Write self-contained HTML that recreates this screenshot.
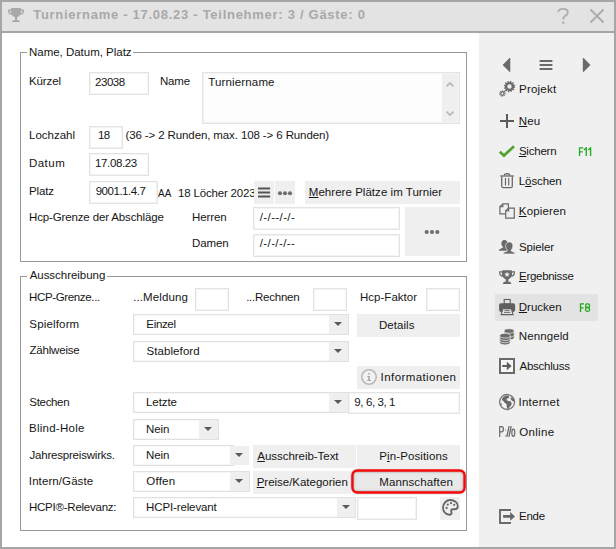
<!DOCTYPE html>
<html><head><meta charset="utf-8"><title>Turnier</title>
<style>
*{box-sizing:border-box;margin:0;padding:0}
html,body{width:616px;height:549px;overflow:hidden;background:#fff}
body{font-family:"Liberation Sans",sans-serif;font-size:11.5px;color:#161616;position:relative}
.a{position:absolute}
.t{position:absolute;white-space:nowrap;line-height:14px}
.grp{position:absolute;border:1px solid #989898}
.inp{position:absolute;border:1px solid #e3e3e3;background:#fff;box-shadow:inset 0 0 0 1px #f4f4f4}
.sel{position:absolute;border:1px solid #e1e1e1;background:#fff;box-shadow:inset 0 0 0 1px #f6f6f6}
.dd{position:absolute;background:#efefef}
.dd:after{content:"";position:absolute;left:50%;top:50%;margin-left:-4.5px;margin-top:-2.5px;border-left:4.5px solid transparent;border-right:4.5px solid transparent;border-top:4.5px solid #5a5a5a}
.btn{position:absolute;background:#efefef}
u{text-decoration:underline;text-underline-offset:0.5px;text-decoration-thickness:1px}
svg{position:absolute;overflow:visible}
</style></head>
<body>
<div class="a" style="left:0px;top:0px;width:616px;height:549px;background:#a6a6a6"></div>
<div class="a" style="left:2px;top:2px;width:612px;height:29px;background:#e3e3e3"></div>
<div class="a" style="left:2px;top:33px;width:477px;height:514px;background:#fff"></div>
<div class="a" style="left:479px;top:33px;width:135px;height:514px;background:#f0f0f0"></div>
<div class="t" style="left:33.20px;top:7px;font-size:13px;font-weight:bold;color:#a9a9a9;letter-spacing:0.720px;line-height:16px">Turniername - 17.08.23 - Teilnehmer: 3 / Gäste: 0</div>
<svg style="left:0;top:0" width="40" height="30" viewBox="0 0 40 30"><path d="M11.100 8H21V12C21 15 18.800 16.600 17.100 17.300V19.800L19.900 21V22H11.900V21L15 19.800V17.300C13.300 16.600 11.100 15 11.100 12Z" fill="#a9a9a9"/><path d="M11.300 10.300H8.600C8.600 13 9.800 14.200 12.300 14.400M20.800 10.300H23.500C23.500 13 22.300 14.200 19.800 14.400" fill="none" stroke="#a9a9a9" stroke-width="1.400"/></svg>
<svg style="left:556.700px;top:8px" width="13" height="16" viewBox="0 0 13 16"><path d="M1.200 4.200C1.500 2 3.300 0.900 6 0.900c2.800 0 4.800 1.300 4.800 3.500 0 1.700-1.100 2.600-2.500 3.500C7 8.700 6.300 9.400 6.300 11v.5" fill="none" stroke="#b0b0b0" stroke-width="1.900"/><rect x="5.300" y="13.500" width="2" height="2.400" fill="#b0b0b0"/></svg>
<svg style="left:590px;top:9px" width="14" height="14" viewBox="0 0 14 14"><path d="M0.500 0.500L13.500 13.500M13.500 0.500L0.500 13.500" stroke="#adadad" stroke-width="2" fill="none"/></svg>
<div class="grp" style="left:20px;top:52px;width:447px;height:210px;"></div>
<div class="grp" style="left:20px;top:276px;width:447px;height:255px;"></div>
<div class="inp" style="left:89px;top:72px;width:60px;height:23px;"></div>
<div class="inp" style="left:202px;top:72px;width:258px;height:52px;background:#fdfdfd"></div>
<div class="a" style="left:442px;top:74px;width:16px;height:48px;background:#efefef"></div>
<svg style="left:446px;top:82px" width="8" height="5" viewBox="0 0 8 5"><path d="M0.600 4.400L4 1l3.400 3.400" fill="none" stroke="#b8b8b8" stroke-width="1.700"/></svg>
<svg style="left:446px;top:111px" width="8" height="5" viewBox="0 0 8 5"><path d="M0.600 0.600L4 4l3.400-3.400" fill="none" stroke="#b8b8b8" stroke-width="1.700"/></svg>
<div class="inp" style="left:89px;top:126px;width:34px;height:23px;"></div>
<div class="inp" style="left:89px;top:153px;width:60px;height:23px;"></div>
<div class="inp" style="left:89px;top:181px;width:69px;height:23px;"></div>
<div class="btn" style="left:254px;top:181px;width:20px;height:23px;"></div>
<svg style="left:258px;top:186.500px" width="13" height="11" viewBox="0 0 13 11"><path d="M0 1.500h12.100M0 5.500h12.100M0 9.500h12.100" stroke="#555" stroke-width="2" fill="none"/></svg>
<div class="btn" style="left:275px;top:181px;width:20px;height:23px;"></div>
<svg style="left:0;top:0" width="1" height="1"><g fill="#6d6d6d"><circle cx="280" cy="193.3" r="2.05"/><circle cx="285" cy="193.3" r="2.05"/><circle cx="290" cy="193.3" r="2.05"/></g></svg>
<div class="btn" style="left:305px;top:181px;width:155px;height:23px;"></div>
<div class="inp" style="left:253px;top:207px;width:147px;height:23px;"></div>
<div class="inp" style="left:253px;top:234px;width:147px;height:23px;"></div>
<div class="btn" style="left:405px;top:207px;width:55px;height:49px;"></div>
<svg style="left:0;top:0" width="1" height="1"><g fill="#6d6d6d"><circle cx="426.7" cy="232" r="2.05"/><circle cx="432" cy="232" r="2.05"/><circle cx="437.3" cy="232" r="2.05"/></g></svg>
<div class="inp" style="left:195px;top:288px;width:34px;height:23px;"></div>
<div class="inp" style="left:313px;top:288px;width:34px;height:23px;"></div>
<div class="inp" style="left:426px;top:288px;width:34px;height:23px;"></div>
<div class="sel" style="left:133px;top:314px;width:216px;height:21px;"></div>
<div class="dd" style="left:329px;top:315px;width:19px;height:19px;"></div>
<div class="btn" style="left:357px;top:314px;width:103px;height:23px;"></div>
<div class="sel" style="left:133px;top:341px;width:216px;height:21px;"></div>
<div class="dd" style="left:329px;top:342px;width:19px;height:19px;"></div>
<div class="btn" style="left:357px;top:366px;width:103px;height:23px;"></div>
<svg style="left:360.500px;top:369px" width="16" height="16" viewBox="0 0 16 16"><circle cx="8" cy="8" r="7.200" fill="#f1f1f1" stroke="#b9b9b9" stroke-width="1.600"/><path d="M7.300 4h1.600v1.600H7.300zM6.300 7h2.600v4h1v1H6.200v-1h1.100V8H6.300z" fill="#a8a8a8"/></svg>
<div class="sel" style="left:133px;top:392px;width:216px;height:21px;"></div>
<div class="dd" style="left:329px;top:393px;width:19px;height:19px;"></div>
<div class="inp" style="left:348px;top:392px;width:112px;height:22px;"></div>
<div class="sel" style="left:133px;top:419px;width:86px;height:21px;"></div>
<div class="dd" style="left:199px;top:420px;width:19px;height:19px;"></div>
<div class="sel" style="left:133px;top:445px;width:101px;height:21px;"></div>
<div class="dd" style="left:230px;top:446px;width:19px;height:19px;"></div>
<div class="btn" style="left:253px;top:445px;width:103px;height:23px;"></div>
<div class="btn" style="left:357px;top:445px;width:103px;height:23px;"></div>
<div class="sel" style="left:133px;top:471px;width:117px;height:21px;"></div>
<div class="dd" style="left:230px;top:472px;width:19px;height:19px;"></div>
<div class="btn" style="left:253px;top:471px;width:98px;height:23px;"></div>
<div class="a" style="left:352px;top:470px;width:113px;height:23px;background:#e9e9e9;border-radius:5px;box-shadow:inset 0 0 4px 1px #bdbdbd"></div>
<svg style="left:0;top:0" width="616" height="549" viewBox="0 0 616 549"><rect x="352.400" y="470.500" width="112.200" height="22" rx="5" fill="none" stroke="rgba(120,120,120,0.18)" stroke-width="4.500"/><rect x="352.400" y="470.500" width="112.200" height="22" rx="5" fill="none" stroke="#f40808" stroke-width="2.400"/></svg>
<div class="sel" style="left:133px;top:497px;width:223px;height:21px;"></div>
<div class="dd" style="left:337px;top:498px;width:18px;height:19px;"></div>
<div class="inp" style="left:357px;top:497px;width:60px;height:23px;"></div>
<div class="btn" style="left:440px;top:497px;width:20px;height:23px;"></div>
<svg style="left:442px;top:499.300px" width="17" height="17.800" viewBox="0 0 17 17" preserveAspectRatio="none"><path d="M8.300 1C4.300 1 1 4.200 1 8.200c0 3.900 2.700 6.900 6.300 6.900 1.500 0 2.300-.8 2.300-1.900 0-.9-.5-1.300-.5-2 0-.8.700-1.400 1.600-1.400h2c1.900 0 3.100-1.200 3.100-3.100C15.800 3.500 12.500 1 8.300 1z" fill="none" stroke="#666" stroke-width="1.800"/><g fill="#666"><circle cx="4.600" cy="8.600" r="1.100"/><circle cx="5.800" cy="5.300" r="1.100"/><circle cx="9" cy="4" r="1.100"/><circle cx="12.200" cy="5.600" r="1.100"/></g></svg>
<div class="a" style="left:495px;top:294px;width:103px;height:27px;background:#e3e3e3"></div>
<div class="a" style="left:27px;top:45px;width:106.25px;height:14px;background:#fff"></div>
<div class="t" style="left:28.98px;top:45px;letter-spacing:-0.017px;">Name, Datum, Platz</div>
<div class="t" style="left:28.98px;top:74px;letter-spacing:-0.117px;">Kürzel</div>
<div class="t" style="left:95.03px;top:75px;letter-spacing:-0.449px;">23038</div>
<div class="t" style="left:159.98px;top:74px;letter-spacing:-0.175px;">Name</div>
<div class="t" style="left:208.27px;top:75px;letter-spacing:0.148px;">Turniername</div>
<div class="t" style="left:29.00px;top:128px;letter-spacing:0.000px;">Lochzahl</div>
<div class="t" style="left:98.10px;top:128px;letter-spacing:-0.724px;">18</div>
<div class="t" style="left:125.46px;top:128px;letter-spacing:-0.112px;">(36 -&gt; 2 Runden, max. 108 -&gt; 6 Runden)</div>
<div class="t" style="left:28.96px;top:156px;letter-spacing:0.475px;">Datum</div>
<div class="t" style="left:95.10px;top:156px;letter-spacing:-0.389px;">17.08.23</div>
<div class="t" style="left:29.01px;top:184px;letter-spacing:-0.116px;">Platz</div>
<div class="t" style="left:95.64px;top:184px;letter-spacing:-0.457px;">9001.1.4.7</div>
<div class="t" style="left:158.39px;top:186px;letter-spacing:0.000px;;transform:scaleX(0.8661);transform-origin:0 0">AA</div>
<div class="t" style="left:178.12px;top:186px;letter-spacing:-0.185px;;width:76.08px;overflow:hidden">18 Löcher 2023</div>
<div class="t" style="left:308.80px;top:185px;letter-spacing:0.038px;"><u>M</u>ehrere Plätze im Turnier</div>
<div class="t" style="left:29.03px;top:210px;letter-spacing:-0.140px;">Hcp-Grenze der Abschläge</div>
<div class="t" style="left:192.02px;top:210px;letter-spacing:-0.093px;">Herren</div>
<div class="t" style="left:191.98px;top:236px;letter-spacing:-0.106px;">Damen</div>
<div class="t" style="left:259.79px;top:210px;letter-spacing:0.379px;">/-/--/-/-</div>
<div class="t" style="left:259.79px;top:236px;letter-spacing:0.379px;">/-/-/-/--</div>
<div class="a" style="left:27px;top:268px;width:80px;height:14px;background:#fff"></div>
<div class="t" style="left:29.67px;top:268px;letter-spacing:-0.033px;">Ausschreibung</div>
<div class="t" style="left:29.04px;top:290px;letter-spacing:-0.355px;">HCP-Grenze...</div>
<div class="t" style="left:133.22px;top:290px;letter-spacing:0.098px;">...Meldung</div>
<div class="t" style="left:246.18px;top:290px;letter-spacing:-0.244px;">...Rechnen</div>
<div class="t" style="left:360.02px;top:290px;letter-spacing:0.018px;">Hcp-Faktor</div>
<div class="t" style="left:29.36px;top:317px;letter-spacing:0.158px;">Spielform</div>
<div class="t" style="left:146.33px;top:317px;letter-spacing:-0.339px;">Einzel</div>
<div class="t" style="left:378.98px;top:318px;letter-spacing:0.050px;">Details</div>
<div class="t" style="left:29.54px;top:343px;letter-spacing:-0.201px;">Zählweise</div>
<div class="t" style="left:146.39px;top:344px;letter-spacing:0.100px;">Stableford</div>
<div class="t" style="left:380.62px;top:370px;letter-spacing:0.415px;">Informationen</div>
<div class="t" style="left:29.36px;top:395px;letter-spacing:-0.331px;">Stechen</div>
<div class="t" style="left:145.98px;top:395px;letter-spacing:-0.065px;">Letzte</div>
<div class="t" style="left:354.29px;top:395px;letter-spacing:-0.393px;">9, 6, 3, 1</div>
<div class="t" style="left:29.02px;top:421px;letter-spacing:0.251px;">Blind-Hole</div>
<div class="t" style="left:145.99px;top:422px;letter-spacing:-0.048px;">Nein</div>
<div class="t" style="left:29.54px;top:448px;letter-spacing:-0.208px;">Jahrespreiswirks.</div>
<div class="t" style="left:145.99px;top:448px;letter-spacing:-0.048px;">Nein</div>
<div class="t" style="left:257.26px;top:449px;letter-spacing:-0.038px;"><u>A</u>usschreib-Text</div>
<div class="t" style="left:379.21px;top:449px;letter-spacing:0.123px;">P<u>i</u>n-Positions</div>
<div class="t" style="left:28.85px;top:474px;letter-spacing:0.093px;">Intern/Gäste</div>
<div class="t" style="left:146.35px;top:474px;letter-spacing:0.217px;">Offen</div>
<div class="t" style="left:256.68px;top:475px;letter-spacing:-0.018px;"><u>P</u>reise/Kategorien</div>
<div class="t" style="left:379.19px;top:475px;letter-spacing:0.131px;">Mannschaften</div>
<div class="t" style="left:29.01px;top:500px;letter-spacing:-0.243px;">HCPI®-Relevanz:</div>
<div class="t" style="left:146.02px;top:500px;letter-spacing:-0.124px;">HCPI-relevant</div>
<div class="t" style="left:519.02px;top:82px;letter-spacing:0.219px;">Projekt</div>
<div class="t" style="left:518.86px;top:114px;letter-spacing:0.056px;"><u>N</u>eu</div>
<div class="t" style="left:518.92px;top:144px;letter-spacing:-0.221px;"><u>S</u>ichern</div>
<div class="t" style="left:518.80px;top:174px;letter-spacing:-0.090px;">L<u>ö</u>schen</div>
<div class="t" style="left:518.80px;top:204px;letter-spacing:0.166px;"><u>K</u>opieren</div>
<div class="t" style="left:519.04px;top:240px;letter-spacing:-0.133px;">Spieler</div>
<div class="t" style="left:519.01px;top:269px;letter-spacing:-0.292px;"><u>E</u>rgebnisse</div>
<div class="t" style="left:518.80px;top:300px;letter-spacing:0.000px;"><u>D</u>rucken</div>
<div class="t" style="left:518.80px;top:329px;letter-spacing:0.094px;">Nenngeld</div>
<div class="t" style="left:519.49px;top:359px;letter-spacing:-0.237px;">Abschluss</div>
<div class="t" style="left:518.46px;top:395px;letter-spacing:0.276px;">Internet</div>
<div class="t" style="left:519.31px;top:425px;letter-spacing:0.304px;">Online</div>
<div class="t" style="left:519.02px;top:509px;letter-spacing:-0.276px;">Ende</div>
<svg style="left:0;top:0" width="616" height="549" viewBox="0 0 616 549">
<g fill="#6a6a6a" stroke="none">
<!-- nav arrows -->
<path d="M502.600 64.900L509.400 58.100Q510.300 57.500 510.300 58.600V71.200Q510.300 72.300 509.400 71.700Z"/>
<path d="M590.500 64.900L583.700 58.100Q582.800 57.500 582.800 58.600V71.200Q582.800 72.300 583.700 71.700Z"/>
<rect x="539.600" y="60" width="12.800" height="2"/><rect x="539.600" y="64" width="12.800" height="2"/><rect x="539.600" y="68" width="12.800" height="2"/>
</g>
<!-- gears -->
<g fill="none" stroke="#6a6a6a">
<circle cx="509.500" cy="86.500" r="3.400" stroke-width="2.400"/>
<circle cx="509.500" cy="86.500" r="4.900" stroke-width="1.600" stroke-dasharray="1.280 1.280"/>
<circle cx="502.400" cy="93.600" r="1.700" stroke-width="1.200"/>
<circle cx="502.400" cy="93.600" r="2.700" stroke-width="1.100" stroke-dasharray="0.850 0.850"/>
<path d="M504.200 91.800L506.300 89.700" stroke-width="1.200"/>
</g>
<!-- plus -->
<path d="M500 121H514M507 114V128" stroke="#5c5c5c" stroke-width="2" fill="none"/>
<!-- check -->
<path d="M499.800 151.800L504 155.600L514 146.200" stroke="#4fa52f" stroke-width="2.700" fill="none" stroke-linejoin="miter"/>
<!-- trash -->
<g fill="none" stroke="#6a6a6a" stroke-width="1.300">
<path d="M500.200 176H513.800"/>
<path d="M504.300 175.800C504.300 173 509.900 173 509.900 175.800" />
<path d="M501.700 176.500V186.200Q501.700 187.700 503.200 187.700H510.800Q512.300 187.700 512.300 186.200V176.500"/>
<path d="M505.500 178V185.500M508.700 178V185.500" stroke-width="1.200"/>
</g>
<path d="M504.800 175.600C505 173.600 509.200 173.600 509.400 175.600Z" fill="#9a9a9a"/>
<!-- copy -->
<g fill="#f0f0f0" stroke="#6a6a6a" stroke-width="1.200">
<path d="M499.900 206.600L502.800 203.900H508.400V213.800H499.900Z"/>
<path d="M499.900 206.600H502.800V203.900" fill="none"/>
<path d="M505.700 210.800L508.600 208.100H514.300V218.100H505.700Z"/>
<path d="M505.700 210.800H508.600V208.100" fill="none"/>
</g>
<!-- spieler -->
<g fill="#6a6a6a">
<path d="M504.500 239.900c1.900 0 3 1.400 3 3.300 0 1.600-.7 2.900-1.500 3.600v1c1 .5 3.400 1.300 3.900 2.100v.9H499v-.9c.4-.9 2.500-1.600 3.900-2.200v-.9c-.8-.7-1.500-2-1.500-3.600 0-1.900 1.200-3.300 3.100-3.300z"/>
<path d="M509.400 241.900c2.300 0 3.500 1.700 3.500 3.900 0 1.800-.8 3.300-1.700 4.100v1.100c1.400.6 3.300 1.200 3.800 2.100v.9h-11.800v-.9c.5-.9 2.700-1.600 4.100-2.200v-1c-.9-.8-1.700-2.300-1.700-4.100 0-2.200 1.400-3.900 3.800-3.900z" stroke="#f0f0f0" stroke-width="0.700"/>
</g>
<!-- trophy -->
<g fill="#6a6a6a">
<path d="M502.300 270.300h9.500v1h3.200v1.600c0 2-1.400 3.600-3.700 3.900-.6 1.100-1.500 2-2.900 2.500v2.500h2v1h.8v1.200h-8.300v-1.200h.8v-1h2v-2.500c-1.400-.5-2.300-1.400-2.900-2.500-2.300-.3-3.700-1.900-3.700-3.900v-1.600h3.200zm-2 2.300v.4c0 1 .7 1.900 1.900 2.300-.2-.8-.3-1.700-.3-2.700zm13.500 0h-1.600c0 1-.1 1.900-.3 2.700 1.200-.4 1.900-1.300 1.900-2.300z"/>
<path d="M507.050 271.700l.8 1.700 1.900.2-1.400 1.300.4 1.900-1.700-1-1.700 1 .4-1.900-1.400-1.300 1.900-.2z" fill="#f0f0f0"/>
</g>
<!-- printer -->
<g>
<path d="M500.900 303.300h12.400q1.800 0 1.800 1.800v5q0 1.800-1.800 1.800H500.900q-1.800 0-1.800-1.800v-5q0-1.800 1.800-1.800z" fill="#5f5f5f"/>
<rect x="504.200" y="299.500" width="6" height="4.200" fill="#e3e3e3" stroke="#5f5f5f" stroke-width="1.100"/>
<path d="M502.800 308.600h8.600l1.600 6h-11.800z" fill="#e3e3e3" stroke="#5f5f5f" stroke-width="1.100"/>
<path d="M504.500 310.400h5.200M504 312.400h6.200" stroke="#5f5f5f" stroke-width="0.900"/>
</g>
<!-- coins -->
<g fill="#6a6a6a" stroke="#f0f0f0" stroke-width="0.700">
<path d="M504 334.600v3.200c0 1.200 2.300 2.200 5.100 2.200s5.100-1 5.100-2.200v-3.200z"/>
<path d="M504 332v3c0 1.200 2.300 2.200 5.100 2.200s5.100-1 5.100-2.200v-3z"/>
<ellipse cx="509.100" cy="331" rx="5.100" ry="2.200"/>
<path d="M499.700 341.200v1.400c0 1.300 2.400 2.300 5.300 2.300s5.300-1 5.300-2.300v-1.400z"/>
<path d="M499.700 338.800v1.700c0 1.300 2.400 2.300 5.300 2.300s5.300-1 5.300-2.300v-1.700z"/>
<path d="M499.700 336.200v2c0 1.300 2.400 2.300 5.300 2.300s5.300-1 5.300-2.300v-2z"/>
<ellipse cx="505" cy="335.700" rx="5.300" ry="2.300"/>
</g>
<!-- abschluss -->
<rect x="500" y="359" width="14" height="14" fill="#f6f6f6" stroke="#6a6a6a" stroke-width="2"/>
<path d="M502.200 364.900h4.600v-3.100l4.900 4.200-4.900 4.200v-3.100h-4.600z" fill="#5f5f5f"/>
<!-- globe -->
<circle cx="507.100" cy="402" r="7.500" fill="#f2f2f2" stroke="#7a7a7a" stroke-width="1.300"/>
<path d="M503.200 397.200c1.300-1.300 3-1.900 4.500-1.800l1.600 1.200-.6 1.700-1.700.3-.5 1.400 1.600 1 2.300.2 1.300 1.700-.4 2.300-1.900 2-.9 1.800-1.200-.2-.6-2.300-.2-2.600-2.200-1.300-1.300-2.100-1.300-.3c.2-1.200.8-2.300 1.500-3z" fill="#6a6a6a"/>
<path d="M511 397.300l1.500.4c.9 1 1.400 2.100 1.700 3.300l-1.200.4-1.500-1.200-.9-1.500z" fill="#6a6a6a"/>
<path d="M500.400 402.800l1.200.8.300 1.500-.8.600c-.4-.9-.7-1.900-.7-2.900z" fill="#6a6a6a"/>
<!-- P://o -->
<g fill="none" stroke="#6a6a6a" stroke-width="1.200"><path d="M499.700 436.900V426.700H501.500Q503.400 426.700 503.400 429.300Q503.400 431.900 501.500 431.900H499.700"/><path d="M506.800 436.900L509.100 426.100M508.900 436.900L511.200 426.100" stroke-width="1.300"/><ellipse cx="513.300" cy="432.800" rx="1.450" ry="3.600"/></g><rect x="505" y="429.600" width="1" height="1.100" fill="#8a8a8a"/><rect x="505" y="435.300" width="1" height="1.200" fill="#8a8a8a"/>
<!-- ende -->
<path d="M511 510H500V523H511" fill="none" stroke="#6a6a6a" stroke-width="1.900"/>
<path d="M503.100 515.100h7.100V512l4.800 4.400-4.800 4.400v-3h-7.100z" fill="#666"/>
<!-- F11 / F8 -->
<g fill="none" stroke="#20a820" stroke-width="1.300" stroke-linejoin="round">
<path d="M579.500 156V147.900H583.300M579.500 151.800H582.800"/>
<path d="M583.900 149.900L586.300 147.800V156"/>
<path d="M588.200 149.900L590.600 147.800V156"/>
<path d="M580.500 312V303.900H584M580.500 307.800H583.600"/>
<rect x="585.600" y="303.800" width="3.900" height="3.700" rx="1.600"/><rect x="585.500" y="307.500" width="4.100" height="3.800" rx="1.700"/>
</g>
</svg>

</body></html>
